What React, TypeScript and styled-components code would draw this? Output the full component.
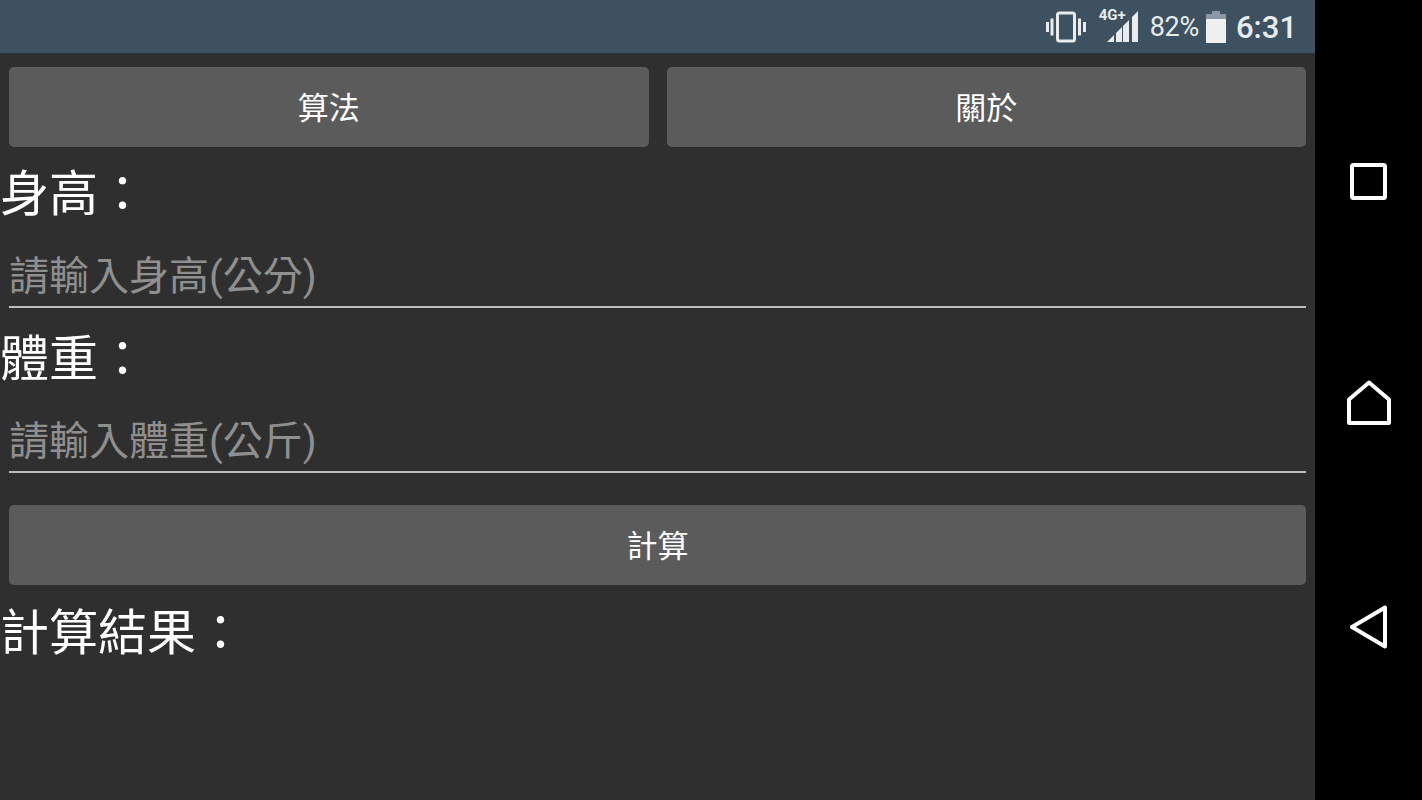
import { FC } from "react";
import styled, { createGlobalStyle } from "styled-components";

const fontStack = `Roboto, "Noto Sans CJK TC", "Noto Sans CJK SC", sans-serif`;

const GlobalStyle = createGlobalStyle`
  html, body {
    margin: 0;
    padding: 0;
    background: #000;
  }
  body {
    font-family: ${fontStack};
  }
`;

const Screen = styled.div`
  display: flex;
  width: 1422px;
  height: 800px;
  overflow: hidden;
`;

const Main = styled.div`
  width: 1315px;
  display: flex;
  flex-direction: column;
  background: #2f2f2f;
`;

const StatusBar = styled.div`
  height: 54px;
  display: flex;
  align-items: center;
  justify-content: flex-end;
  padding: 1px 18px 0 0;
  background: #3e5161;
  border-bottom: 1px solid #2a3540;
  box-sizing: border-box;
  color: #e8ecef;
`;

const Percent = styled.span`
  font-size: 27px;
  margin-left: 11px;
  letter-spacing: -0.3px;
`;

const Clock = styled.span`
  font-size: 31px;
  font-weight: 500;
  margin-left: 9px;
`;

const SignalSlot = styled.span`
  position: relative;
  display: flex;
  margin-left: 13px;
`;

const NetworkTag = styled.span`
  position: absolute;
  left: 0;
  top: -1px;
  font-size: 15px;
  line-height: 15px;
  font-weight: 700;
`;

const BatterySlot = styled.span`
  display: flex;
  margin-left: 6px;
`;

const Content = styled.div`
  display: flex;
  flex-direction: column;
  padding: 13px 9px 0;
`;

const ButtonRow = styled.div`
  display: flex;
  gap: 18px;
`;

const ActionButton = styled.button`
  flex: 1;
  height: 80px;
  padding: 0 0 4px;
  border: none;
  border-radius: 5px;
  background: #5b5b5c;
  color: #fff;
  font-family: ${fontStack};
  font-size: 31px;
`;

const FieldLabel = styled.div<{ $top: number }>`
  margin: ${(p) => p.$top}px 0 0 -9px;
  height: 60px;
  line-height: 60px;
  font-size: 49px;
  color: #fff;
`;

const FieldInput = styled.input`
  display: block;
  width: 100%;
  height: 83px;
  padding: 21px 0 0;
  box-sizing: border-box;
  background: transparent;
  border: none;
  border-bottom: 2px solid #bdbdbd;
  outline: none;
  color: #fff;
  font-family: ${fontStack};
  font-size: 40px;
  &::placeholder {
    color: #8f8f8f;
    opacity: 1;
  }
`;

const CalcRow = styled.div`
  display: flex;
  margin-top: 32px;
`;

const NavBar = styled.div`
  flex: 1;
  background: #000;
  display: flex;
  flex-direction: column;
  align-items: center;
  padding-top: 163px;
  gap: 179px;
`;

const VibrateIcon = () => (
  <svg width="40" height="32" viewBox="0 0 40 32" fill="none" stroke="#e8ecef">
    <rect x="11.5" y="2" width="17" height="28" rx="2" strokeWidth="3" />
    <path d="M1.5 11v10M6 7.5v17M33.5 7.5v17M38.5 11v10" strokeWidth="3" />
  </svg>
);

const SignalIcon = () => (
  <svg width="40" height="36" viewBox="0 0 40 36">
    <path d="M8 33l7-7v7zM17 33v-9l6-6v15zM24 33V17l6-6v22zM33 33V8l6-6v31z" fill="#e8ecef" />
  </svg>
);

const BatteryIcon = () => (
  <svg width="22" height="32" viewBox="0 0 22 32">
    <path d="M7 0h8v3H7z" fill="#8b98a3" />
    <path d="M1 3h20v5H1z" fill="#8b98a3" />
    <path d="M1 8h20v24H1z" fill="#eef0f2" />
  </svg>
);

const RecentIcon = () => (
  <svg width="38" height="38" viewBox="0 0 38 38" fill="none" stroke="#fff" strokeWidth="4" strokeLinejoin="round">
    <rect x="2" y="2" width="33" height="33" rx="1.5" />
  </svg>
);

const HomeIcon = () => (
  <svg width="46" height="46" viewBox="0 0 46 46" fill="none" stroke="#fff" strokeWidth="4" strokeLinejoin="round">
    <path d="M23 2.5L43 19.5V43H3V19.5z" />
  </svg>
);

const BackIcon = () => (
  <svg width="40" height="44" viewBox="0 0 40 44" fill="none" stroke="#fff" strokeWidth="4" strokeLinejoin="round">
    <path d="M36 2.5V41.5L3 22z" />
  </svg>
);

const App: FC<{}> = () => {
  return (
    <Screen>
      <GlobalStyle />
      <Main>
        <StatusBar>
          <VibrateIcon />
          <SignalSlot>
            <SignalIcon />
            <NetworkTag>4G+</NetworkTag>
          </SignalSlot>
          <Percent>82%</Percent>
          <BatterySlot>
            <BatteryIcon />
          </BatterySlot>
          <Clock>6:31</Clock>
        </StatusBar>
        <Content>
          <ButtonRow>
            <ActionButton>算法</ActionButton>
            <ActionButton>關於</ActionButton>
          </ButtonRow>
          <FieldLabel $top={18}>身高：</FieldLabel>
          <FieldInput placeholder="請輸入身高(公分)" />
          <FieldLabel $top={22}>體重：</FieldLabel>
          <FieldInput placeholder="請輸入體重(公斤)" />
          <CalcRow>
            <ActionButton>計算</ActionButton>
          </CalcRow>
          <FieldLabel $top={19}>計算結果：</FieldLabel>
        </Content>
      </Main>
      <NavBar>
        <RecentIcon />
        <HomeIcon />
        <BackIcon />
      </NavBar>
    </Screen>
  );
};

export default App;
